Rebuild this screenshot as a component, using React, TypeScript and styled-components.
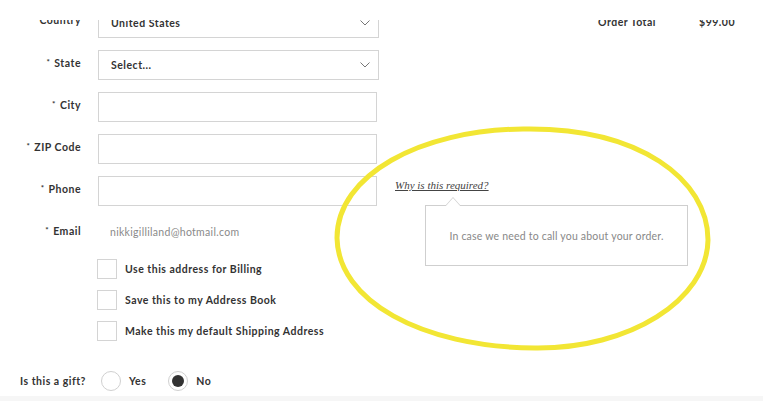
import styled, { createGlobalStyle } from 'styled-components';

const GlobalStyle = createGlobalStyle`
  html, body {
    margin: 0;
    padding: 0;
    background: #ffffff;
  }
  body {
    font-family: Lato, "Liberation Sans", Arial, sans-serif;
    color: #333333;
  }
`;

const Page = styled.div`
  position: relative;
  width: 763px;
  height: 401px;
  overflow: hidden;
  background: #ffffff;
`;

const ScrollMask = styled.div`
  position: absolute;
  top: 0;
  left: 0;
  right: 0;
  height: 20px;
  background: #ffffff;
  z-index: 5;
`;

const Layout = styled.div`
  display: grid;
  grid-template-columns: 380px 1fr;
  padding-top: 8px;
`;

const Form = styled.div`
  display: flex;
  flex-direction: column;
`;

const Field = styled.div`
  display: flex;
  align-items: flex-start;
  gap: 17px;
  height: 30px;
  margin-bottom: 12px;
  position: relative;
  &.email {
    height: 24px;
    margin-bottom: 17px;
  }
`;

const Label = styled.label`
  width: 81px;
  flex: none;
  text-align: right;
  font-size: 10.5px;
  font-weight: 700;
  letter-spacing: 0.5px;
  line-height: 14px;
  padding-top: 5px;
  color: #333;
  white-space: nowrap;
`;

const Required = styled.span`
  font-size: 8px;
  margin-right: 4px;
  vertical-align: 2px;
`;

const Box = styled.div<{ $width: number }>`
  width: ${(p) => p.$width}px;
  flex: none;
  height: 30px;
  box-sizing: border-box;
  border: 1px solid #d4d4d4;
  background: #fff;
  display: flex;
  align-items: center;
  justify-content: space-between;
  padding: 0 8px 0 12px;
  font-size: 10.5px;
  font-weight: 700;
  letter-spacing: 0.5px;
  color: #333;
`;

const Chevron = () => (
  <svg width="10" height="6" viewBox="0 0 10 6">
    <polyline points="0.5,0.5 5,5 9.5,0.5" fill="none" stroke="#777" strokeWidth="1" />
  </svg>
);

const EmailValue = styled.div`
  padding: 8px 0 0 12px;
  font-size: 10.5px;
  letter-spacing: 0.3px;
  color: #8a8a8a;
`;

const Help = styled.div`
  position: relative;
  margin: -3px 0 0 1px;
`;

const HelpLink = styled.a`
  font-family: "Liberation Serif", "Times New Roman", serif;
  font-style: italic;
  font-size: 11px;
  color: #444;
  text-decoration: underline;
  white-space: nowrap;
`;

const Tooltip = styled.div`
  position: absolute;
  top: 32px;
  left: 30px;
  width: 263px;
  height: 61px;
  box-sizing: border-box;
  border: 1px solid #cfcfcf;
  background: #fff;
  display: flex;
  align-items: center;
  justify-content: center;
  font-size: 10.5px;
  letter-spacing: 0.2px;
  color: #888;
  white-space: nowrap;
  &::before,
  &::after {
    content: '';
    position: absolute;
    left: 19px;
    width: 0;
    height: 0;
    border-left: 8px solid transparent;
    border-right: 8px solid transparent;
  }
  &::before {
    top: -9px;
    border-bottom: 9px solid #cfcfcf;
  }
  &::after {
    top: -8px;
    border-bottom: 9px solid #fff;
  }
`;

const Options = styled.div`
  display: flex;
  flex-direction: column;
  gap: 11px;
  padding-left: 97px;
`;

const Option = styled.div`
  display: flex;
  align-items: center;
  gap: 8px;
  font-size: 10.5px;
  font-weight: 700;
  letter-spacing: 0.5px;
  color: #333;
`;

const CheckBox = styled.span`
  width: 20px;
  height: 20px;
  box-sizing: border-box;
  border: 1px solid #d4d4d4;
  background: #fff;
  flex: none;
`;

const GiftRow = styled.div`
  display: flex;
  align-items: center;
  padding-left: 20px;
  margin-top: 30px;
  font-size: 10.5px;
  font-weight: 700;
  letter-spacing: 0.5px;
  color: #333;
`;

const GiftLabel = styled.span`
  margin-right: 15px;
`;

const Radio = styled.span<{ $checked?: boolean }>`
  width: 20px;
  height: 20px;
  box-sizing: border-box;
  border-radius: 50%;
  border: 1px solid #d0d0d0;
  background: #fff;
  display: inline-flex;
  align-items: center;
  justify-content: center;
  margin-right: 8px;
  &::after {
    content: '';
    width: 12px;
    height: 12px;
    border-radius: 50%;
    background: ${(p) => (p.$checked ? '#333' : 'transparent')};
  }
`;

const RadioText = styled.span`
  margin-right: 22px;
`;

const Side = styled.div`
  display: flex;
  justify-content: flex-end;
  padding-right: 28px;
  align-items: flex-start;
`;

const Summary = styled.div`
  display: flex;
  justify-content: space-between;
  width: 137px;
  padding-top: 8px;
  font-size: 10.5px;
  font-weight: 700;
  letter-spacing: 0.5px;
  color: #333;
`;

const Footer = styled.div`
  position: absolute;
  left: 0;
  right: 0;
  bottom: 0;
  height: 5px;
  background: #f6f6f6;
`;

const Annotation = styled.svg`
  position: absolute;
  left: 0;
  top: 0;
  pointer-events: none;
  z-index: 6;
`;

export default function App() {
  return (
    <Page>
      <GlobalStyle />
      <ScrollMask />
      <Layout>
        <Form>
          <Field>
            <Label>Country</Label>
            <Box $width={281}>
              United States
              <Chevron />
            </Box>
          </Field>
          <Field>
            <Label>
              <Required>*</Required>State
            </Label>
            <Box $width={281}>
              Select...
              <Chevron />
            </Box>
          </Field>
          <Field>
            <Label>
              <Required>*</Required>City
            </Label>
            <Box $width={279} />
          </Field>
          <Field>
            <Label>
              <Required>*</Required>ZIP Code
            </Label>
            <Box $width={279} />
          </Field>
          <Field>
            <Label>
              <Required>*</Required>Phone
            </Label>
            <Box $width={279} />
            <Help>
              <HelpLink>Why is this required?</HelpLink>
              <Tooltip>In case we need to call you about your order.</Tooltip>
            </Help>
          </Field>
          <Field className="email">
            <Label>
              <Required>*</Required>Email
            </Label>
            <EmailValue>nikkigilliland@hotmail.com</EmailValue>
          </Field>
          <Options>
            <Option>
              <CheckBox />
              Use this address for Billing
            </Option>
            <Option>
              <CheckBox />
              Save this to my Address Book
            </Option>
            <Option>
              <CheckBox />
              Make this my default Shipping Address
            </Option>
          </Options>
          <GiftRow>
            <GiftLabel>Is this a gift?</GiftLabel>
            <Radio />
            <RadioText>Yes</RadioText>
            <Radio $checked />
            <RadioText>No</RadioText>
          </GiftRow>
        </Form>
        <Side>
          <Summary>
            <span>Order Total</span>
            <span>$99.00</span>
          </Summary>
        </Side>
      </Layout>
      <Footer />
      <Annotation width="763" height="401" viewBox="0 0 763 401">
        <path
          d="M523 129 C 640 127, 708 180, 708 240 C 707 300, 630 349, 535 348 C 420 347, 338 300, 337 238 C 337 175, 420 130, 523 129 Z"
          fill="none"
          stroke="#f2e634"
          strokeWidth="5"
          strokeLinecap="round"
        />
      </Annotation>
    </Page>
  );
}
